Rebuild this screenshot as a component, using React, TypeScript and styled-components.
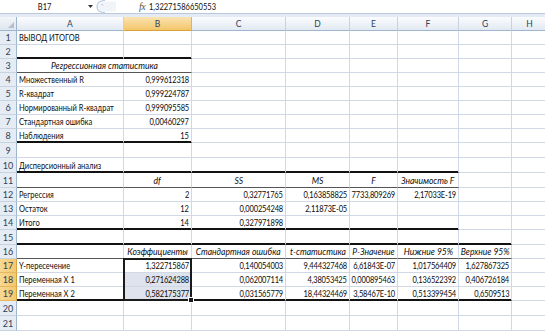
import React from 'react';
import styled, { createGlobalStyle, css } from 'styled-components';

const FONT = `"Lato", "Liberation Sans", sans-serif`;
const SQUEEZE = 0.79;
const ITALIC_SQUEEZE = 0.9;

const GlobalStyle = createGlobalStyle`
  html, body { margin: 0; padding: 0; background: #fff; overflow: hidden; }
  body { font-family: ${FONT}; width: 545px; height: 333px; }
`;

const COLS = [17, 107, 68, 94, 64, 48, 61, 53, 36];
const ROWS = [14, 14, 14, 14, 14, 14, 14, 14, 15, 15, 15, 14, 14, 14, 15, 14, 14, 14, 14, 15, 15];
const LETTERS = ['A', 'B', 'C', 'D', 'E', 'F', 'G', 'H'];

type Align = 'left' | 'right' | 'center';
interface CellSpec { text: string; align: Align; italic?: boolean; span?: number }
interface RowSpec { cells: (CellSpec | null)[]; line?: 'thick' | 'thin'; lineTo?: number }

const L = (t: string): CellSpec => ({ text: t, align: 'left' });
const R = (t: string): CellSpec => ({ text: t, align: 'right' });
const H = (t: string): CellSpec => ({ text: t, align: 'center', italic: true });

const DATA: RowSpec[] = [
  { cells: [L('ВЫВОД ИТОГОВ')] },
  { cells: [], line: 'thick', lineTo: 1 },
  { cells: [{ text: 'Регрессионная статистика', align: 'center', italic: true, span: 2 }], line: 'thin', lineTo: 1 },
  { cells: [L('Множественный R'), R('0,999612318')] },
  { cells: [L('R-квадрат'), R('0,999224787')] },
  { cells: [L('Нормированный R-квадрат'), R('0,999095585')] },
  { cells: [L('Стандартная ошибка'), R('0,00460297')] },
  { cells: [L('Наблюдения'), R('15')], line: 'thick', lineTo: 1 },
  { cells: [] },
  { cells: [L('Дисперсионный анализ')], line: 'thick', lineTo: 5 },
  { cells: [null, H('df'), H('SS'), H('MS'), H('F'), H('Значимость F')], line: 'thin', lineTo: 5 },
  { cells: [L('Регрессия'), R('2'), R('0,32771765'), R('0,163858825'), R('7733,809269'), R('2,17033E-19')] },
  { cells: [L('Остаток'), R('12'), R('0,000254248'), R('2,11873E-05')] },
  { cells: [L('Итого'), R('14'), R('0,327971898')], line: 'thick', lineTo: 5 },
  { cells: [], line: 'thick', lineTo: 6 },
  {
    cells: [null, H('Коэффициенты'), H('Стандартная ошибка'), H('t-статистика'), H('P-Значение'), H('Нижние 95%'), H('Верхние 95%')],
    line: 'thin',
    lineTo: 6,
  },
  { cells: [L('Y-пересечение'), R('1,322715867'), R('0,140054003'), R('9,444327468'), R('6,61843E-07'), R('1,017564409'), R('1,627867325')] },
  { cells: [L('Переменная X 1'), R('0,271624288'), R('0,062007114'), R('4,38053425'), R('0,000895463'), R('0,136522392'), R('0,406726184')] },
  {
    cells: [L('Переменная X 2'), R('0,582175377'), R('0,031565779'), R('18,44324469'), R('3,58467E-10'), R('0,513399454'), R('0,6509513')],
    line: 'thick',
    lineTo: 6,
  },
  { cells: [] },
  { cells: [] },
];

const SEL_ROWS = [17, 18, 19];
const SEL_COL = 1;

const Window = styled.div`
  width: 545px;
  height: 333px;
  overflow: hidden;
  display: flex;
  flex-direction: column;
  background: #fff;
`;

const FormulaBar = styled.div`
  display: flex;
  align-items: center;
  height: 14px;
  box-sizing: border-box;
  border-bottom: 1px solid #b9c8da;
  background: #fff;
  font-size: 9.5px;
  color: #111;
  flex-shrink: 0;
`;

const NameBox = styled.div`
  width: 86px;
  display: flex;
  justify-content: center;
  padding-left: 4px;
  box-sizing: border-box;
`;

const DropArrow = styled.div`
  width: 8px;
  display: flex;
  justify-content: center;
`;

const Splitter = styled.div`
  width: 43px;
  height: 13px;
  display: flex;
  align-items: center;
  padding-left: 2px;
`;

const FxLabel = styled.div`
  font-family: "Liberation Serif", serif;
  font-style: italic;
  font-size: 10px;
  color: #555;
  width: 10px;
  letter-spacing: -0.5px;
`;

const Squeezed = styled.span<{ $origin: Align; $scale: number }>`
  display: inline-block;
  white-space: nowrap;
  transform: scaleX(${(p) => p.$scale});
  transform-origin: ${(p) => p.$origin} center;
`;

const Strip = styled.div`
  height: 3px;
  background: #e4ebf5;
  flex-shrink: 0;
`;

const Sheet = styled.div`
  position: relative;
  display: grid;
  grid-template-columns: ${COLS.map((c) => `${c}px`).join(' ')};
  grid-template-rows: 14px ${ROWS.map((r) => `${r}px`).join(' ')};
  font-size: 9.5px;
`;

const Corner = styled.div`
  box-sizing: border-box;
  border-right: 1px solid #9eb6ce;
  border-bottom: 1px solid #9eb6ce;
  background: linear-gradient(#f3f6fa, #dfe6ef);
  display: flex;
  align-items: flex-end;
  justify-content: flex-end;
  padding: 0 2px 2px 0;
`;

const ColHead = styled.div<{ $active?: boolean }>`
  box-sizing: border-box;
  border-right: 1px solid ${(p) => (p.$active ? '#e0b45a' : '#c7d3e1')};
  border-bottom: 1px solid ${(p) => (p.$active ? '#d8a33e' : '#9eb6ce')};
  background: ${(p) => (p.$active ? 'linear-gradient(#fae3b2, #f4c66a)' : 'linear-gradient(#fafcfe, #e3e9f2)')};
  display: flex;
  align-items: center;
  justify-content: center;
  color: #2f4157;
  font-size: 8.5px;
`;

const RowHead = styled.div<{ $active?: boolean }>`
  box-sizing: border-box;
  border-right: 1px solid ${(p) => (p.$active ? '#d8a33e' : '#9eb6ce')};
  border-bottom: 1px solid ${(p) => (p.$active ? '#e3b85e' : '#c7d3e1')};
  background: ${(p) => (p.$active ? 'linear-gradient(90deg, #f8d891, #f3c86e)' : '#e6ecf4')};
  display: flex;
  align-items: center;
  justify-content: center;
  color: #2f4157;
  font-size: 9px;
`;

const Cell = styled.div<{ $align: Align; $italic?: boolean; $line?: 'thick' | 'thin'; $sel?: boolean; $span: number }>`
  box-sizing: border-box;
  grid-column: span ${(p) => p.$span};
  border-right: 1px solid #d0d7e5;
  border-bottom: 1px solid ${(p) => (p.$line === 'thick' ? '#111' : p.$line === 'thin' ? '#555' : '#d0d7e5')};
  ${(p) =>
    p.$line === 'thick' &&
    css`
      box-shadow: inset 0 -1px 0 #111;
    `}
  background: ${(p) => (p.$sel ? '#dfe3ee' : '#fff')};
  display: flex;
  align-items: center;
  justify-content: ${(p) => (p.$align === 'left' ? 'flex-start' : p.$align === 'right' ? 'flex-end' : 'center')};
  padding: 0 2px 0 2px;
  white-space: nowrap;
  font-style: ${(p) => (p.$italic ? 'italic' : 'normal')};
  letter-spacing: ${(p) => (p.$align === 'right' ? '-0.2px' : '0')};
  color: #0d0d0d;
  min-width: 0;
`;

const Selection = styled.div`
  position: absolute;
  box-sizing: border-box;
  border: 2px solid #1a1a1a;
  pointer-events: none;
`;

const FillHandle = styled.div`
  position: absolute;
  right: -4px;
  bottom: -4px;
  width: 6px;
  height: 6px;
  box-sizing: border-box;
  background: #1a1a1a;
  border: 1px solid #fff;
`;

function sum(a: number[]) {
  return a.reduce((s, v) => s + v, 0);
}

function renderRow(row: RowSpec, ri: number) {
  const rowNum = ri + 1;
  const out: React.ReactNode[] = [];
  out.push(
    <RowHead key={`h${rowNum}`} $active={SEL_ROWS.includes(rowNum)}>
      {rowNum}
    </RowHead>,
  );
  let c = 0;
  while (c < LETTERS.length) {
    const spec = row.cells[c] ?? null;
    const span = spec?.span ?? 1;
    const line = row.line && row.lineTo !== undefined && c <= row.lineTo ? row.line : undefined;
    const sel = c === SEL_COL && SEL_ROWS.includes(rowNum) && rowNum !== SEL_ROWS[0];
    const align = spec?.align ?? 'left';
    out.push(
      <Cell key={`c${rowNum}-${c}`} $align={align} $italic={spec?.italic} $line={line} $sel={sel} $span={span}>
        {spec ? (
          <Squeezed $origin={align} $scale={spec.italic ? ITALIC_SQUEEZE : SQUEEZE}>
            {spec.text}
          </Squeezed>
        ) : null}
      </Cell>,
    );
    c += span;
  }
  return out;
}

export default function App() {
  const selLeft = COLS[0] + COLS[1] - 1;
  const selTop = 14 + sum(ROWS.slice(0, SEL_ROWS[0] - 1)) - 1;
  const selHeight = sum(ROWS.slice(SEL_ROWS[0] - 1, SEL_ROWS[SEL_ROWS.length - 1])) + 1;
  return (
    <>
      <GlobalStyle />
      <Window>
        <FormulaBar>
          <NameBox>
            <Squeezed $origin="center" $scale={SQUEEZE}>
              B17
            </Squeezed>
          </NameBox>
          <DropArrow>
            <svg width="5" height="3" viewBox="0 0 5 3">
              <path d="M0 0 L5 0 L2.5 3 Z" fill="#333" />
            </svg>
          </DropArrow>
          <Splitter>
            <svg width="20" height="13" viewBox="0 0 20 13">
              <path d="M9 0.5 C3 0.5 1 3.5 1 6.5 C1 9.5 3 12.5 9 12.5" fill="none" stroke="#b8cbe0" strokeWidth="1.2" />
              <path d="M9 1.5 C4 1.5 2 4 2 6.5 C2 9 4 11.5 9 11.5 L20 11.5 L20 1.5 Z" fill="#f1f5fa" />
              <path d="M5.5 4 L7 5.5" stroke="#9aa9bb" strokeWidth="0.8" />
            </svg>
          </Splitter>
          <FxLabel>fx</FxLabel>
          <Squeezed $origin="left" $scale={SQUEEZE}>
            1,32271586650553
          </Squeezed>
        </FormulaBar>
        <Strip />
        <Sheet>
          <Corner>
            <svg width="6" height="6" viewBox="0 0 6 6">
              <path d="M6 0 L6 6 L0 6 Z" fill="#b3c0d0" />
            </svg>
          </Corner>
          {LETTERS.map((l, i) => (
            <ColHead key={l} $active={i === SEL_COL}>
              {l}
            </ColHead>
          ))}
          {DATA.map((row, ri) => renderRow(row, ri))}
          <Selection style={{ left: selLeft, top: selTop, width: COLS[2] + 1, height: selHeight }}>
            <FillHandle />
          </Selection>
        </Sheet>
      </Window>
    </>
  );
}
